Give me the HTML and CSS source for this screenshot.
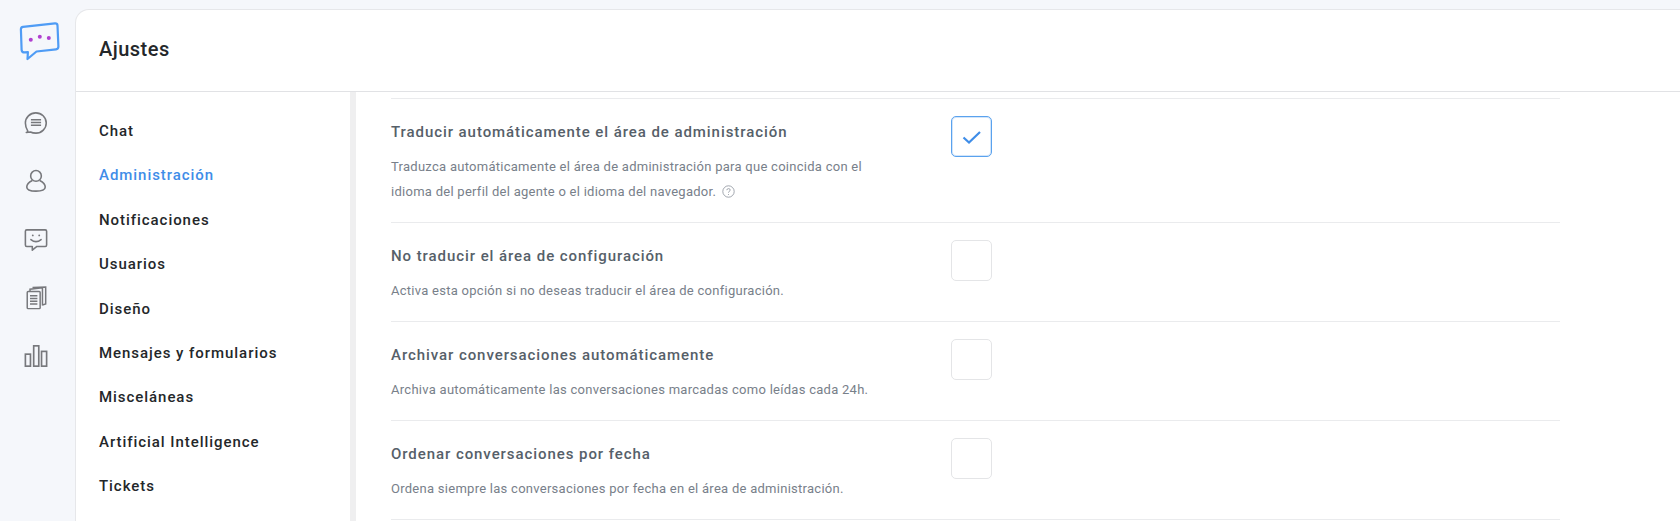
FILE: index.html
```html
<!DOCTYPE html>
<html lang="es">
<head>
  <meta charset="UTF-8" />
  <title>Ajustes</title>
  <link rel="stylesheet" href="styles.css">
</head>
<body>
  <aside class="rail">
    <svg class="logo" width="42" height="42" viewBox="0 0 42 42" fill="none">
      <path d="M5 7.8 L37 4.3 Q39.4 4.2 39.5 6.5 L40.4 27.5 Q40.4 30 38 30.3 L18.5 32.5 L9.5 40 L9.9 33.2 L6.5 33.4 Q3.8 33.4 3.6 30.8 L2.9 10.3 Q2.9 8 5 7.8 Z" stroke="#4f9cf5" stroke-width="2.2" stroke-linejoin="round"/>
      <circle cx="12.8" cy="20.7" r="2" fill="#b03fd0"/>
      <circle cx="21.8" cy="17.7" r="2" fill="#b03fd0"/>
      <circle cx="30.8" cy="19" r="2" fill="#b03fd0"/>
    </svg>
    <nav class="rail-icons">
      <svg width="24" height="24" viewBox="0 0 26 26" fill="none" stroke="#77787c" stroke-width="1.7">
        <path d="M4 21.5 Q1.5 17.5 1.5 13 A11.3 11 0 1 1 13 24 Q9.5 24 7 22.7 L2.5 23.3 Q4.5 22.8 4 21.5 Z" stroke-linejoin="round"/>
        <path d="M7.5 9.5H18.5M7.5 12.5H18.5M7.5 15.5H18.5"/>
      </svg>
      <svg width="24" height="24" viewBox="0 0 26 26" fill="none" stroke="#77787c" stroke-width="1.7">
        <circle cx="13" cy="7.5" r="5.8"/>
        <path d="M9 12.5 C5 14.5 3 16.5 3 19.5 C3 22.5 6 24 13 24 C20 24 23 22.5 23 19.5 C23 16.5 21 14.5 17 12.5"/>
      </svg>
      <svg width="24" height="24" viewBox="0 0 26 26" fill="none" stroke="#77787c" stroke-width="1.7">
        <path d="M3 2H23Q24.5 2 24.5 3.5V18.5Q24.5 20 23 20H14L9 24V20H3Q1.5 20 1.5 18.5V3.5Q1.5 2 3 2Z" stroke-linejoin="round"/>
        <path d="M7.5 12.5Q13 17 18.5 12.5" stroke-linecap="round"/>
        <circle cx="9.5" cy="8" r="1" fill="#77787c" stroke="none"/>
        <circle cx="16.5" cy="8" r="1" fill="#77787c" stroke="none"/>
      </svg>
      <svg width="24" height="24" viewBox="0 0 26 26" fill="none" stroke="#77787c" stroke-width="1.6">
        <rect x="3.5" y="6" width="14" height="18.5" rx="1"/>
        <path d="M6.5 5.5V3.5L20 2V21M10 2.2V1.5L23.5 1V19.5L20 20.5M6.5 10.5H14.5M6.5 13.5H14.5M6.5 16.5H14.5M6.5 19.5H14.5"/>
      </svg>
      <svg width="24" height="24" viewBox="0 0 26 26" fill="none" stroke="#77787c" stroke-width="1.8">
        <rect x="1.5" y="11" width="5.5" height="13"/>
        <rect x="10.5" y="2" width="5.5" height="22"/>
        <rect x="19" y="8" width="5.5" height="16"/>
      </svg>
    </nav>
  </aside>

  <main class="panel">
    <header class="panel-head">Ajustes</header>
    <div class="panel-body">
      <ul class="tabs">
        <li>Chat</li>
        <li class="active">Administración</li>
        <li>Notificaciones</li>
        <li>Usuarios</li>
        <li>Diseño</li>
        <li>Mensajes y formularios</li>
        <li>Misceláneas</li>
        <li>Artificial Intelligence</li>
        <li>Tickets</li>
      </ul>
      <section class="settings">
        <div class="setting">
          <div class="setting-text">
            <h2>Traducir automáticamente el área de administración</h2>
            <p>Traduzca automáticamente el área de administración para que coincida con el idioma del perfil del agente o el idioma del navegador.
              <svg class="help" width="13" height="13" viewBox="0 0 13 13" fill="none" stroke="#8a919b" stroke-width="0.8">
                <circle cx="6.5" cy="6.5" r="5.7"/>
                <path d="M4.8 5.2Q4.9 3.6 6.5 3.6Q8.2 3.6 8.2 5Q8.2 5.9 7.2 6.4Q6.5 6.8 6.5 7.7"/>
                <circle cx="6.5" cy="9.4" r="0.5" fill="#8a919b" stroke="none"/>
              </svg>
            </p>
          </div>
          <span class="check on">
            <svg width="20" height="16" viewBox="0 0 20 16" fill="none" stroke="#3f8de8" stroke-width="2.2">
              <path d="M1.5 8.5L7 13.5L18 3"/>
            </svg>
          </span>
        </div>
        <div class="setting">
          <div class="setting-text">
            <h2>No traducir el área de configuración</h2>
            <p>Activa esta opción si no deseas traducir el área de configuración.</p>
          </div>
          <span class="check"></span>
        </div>
        <div class="setting">
          <div class="setting-text">
            <h2>Archivar conversaciones automáticamente</h2>
            <p>Archiva automáticamente las conversaciones marcadas como leídas cada 24h.</p>
          </div>
          <span class="check"></span>
        </div>
        <div class="setting">
          <div class="setting-text">
            <h2>Ordenar conversaciones por fecha</h2>
            <p>Ordena siempre las conversaciones por fecha en el área de administración.</p>
          </div>
          <span class="check"></span>
        </div>
      </section>
    </div>
  </main>
</body>
</html>
```

FILE: styles.css
```css
html, body {
  height: 100%;
}
body {
  margin: 0;
  display: flex;
  overflow: hidden;
  background-color: #f5f7fb;
  font-family: 'Roboto', sans-serif;
  color: #24272a;
}
.rail {
  width: 75px;
  flex: none;
  box-sizing: border-box;
  padding-right: 3px;
  display: flex;
  flex-direction: column;
  align-items: center;
}
.logo {
  margin-top: 19px;
  margin-left: 6px;
}
.rail-icons {
  display: flex;
  flex-direction: column;
  align-items: center;
  gap: 34.3px;
  margin-top: 50px;
}
.panel {
  flex: 1;
  min-width: 0;
  margin-top: 9px;
  background-color: #fff;
  border-top: 1px solid #e6e7ea;
  border-left: 1px solid #e6e7ea;
  border-top-left-radius: 14px;
  display: flex;
  flex-direction: column;
}
.panel-head {
  height: 82px;
  flex: none;
  box-sizing: border-box;
  padding: 25px 0 0 23px;
  border-bottom: 1px solid #e1e2e5;
  font-size: 20px;
  line-height: 28px;
  font-weight: 500;
  letter-spacing: 0.47px;
}
.panel-body {
  flex: 1;
  display: flex;
  min-height: 0;
}
.tabs {
  list-style: none;
  margin: 0;
  padding: 17px 0 0 23px;
  width: 251px;
  flex: none;
  border-right: 6px solid #efeff0;
}
.tabs li {
  height: 44.4px;
  line-height: 44.4px;
  font-size: 15px;
  font-weight: 500;
  letter-spacing: 0.95px;
  color: #24272a;
}
.tabs li.active {
  color: #3f8de8;
}
.settings {
  width: 1169px;
  margin-left: 35px;
  padding-top: 6px;
}
.setting {
  display: flex;
  box-sizing: border-box;
  height: 99px;
  border-top: 1px solid #eaebed;
  padding-top: 17px;
}
.setting:first-child {
  height: 124px;
}
.setting:last-child {
  height: 100px;
  border-bottom: 1px solid #eaebed;
}
.setting-text {
  width: 480px;
  margin-right: 80px;
}
.setting h2 {
  margin: 4px 0 0;
  font-size: 15px;
  line-height: 25px;
  font-weight: 500;
  letter-spacing: 0.93px;
  color: #566069;
}
.setting p {
  margin: 9px 0 0;
  font-size: 13px;
  line-height: 25px;
  letter-spacing: 0.27px;
  color: #78808a;
}
.help {
  vertical-align: -2px;
  margin-left: 2px;
}
.check {
  width: 41px;
  height: 41px;
  flex: none;
  box-sizing: border-box;
  border: 1px solid #e4e5e7;
  border-radius: 5px;
  display: flex;
  align-items: center;
  justify-content: center;
}
.check.on {
  border-color: #5aa2ee;
  box-shadow: 0 0 0 1px #d2e5fa inset;
}
```
